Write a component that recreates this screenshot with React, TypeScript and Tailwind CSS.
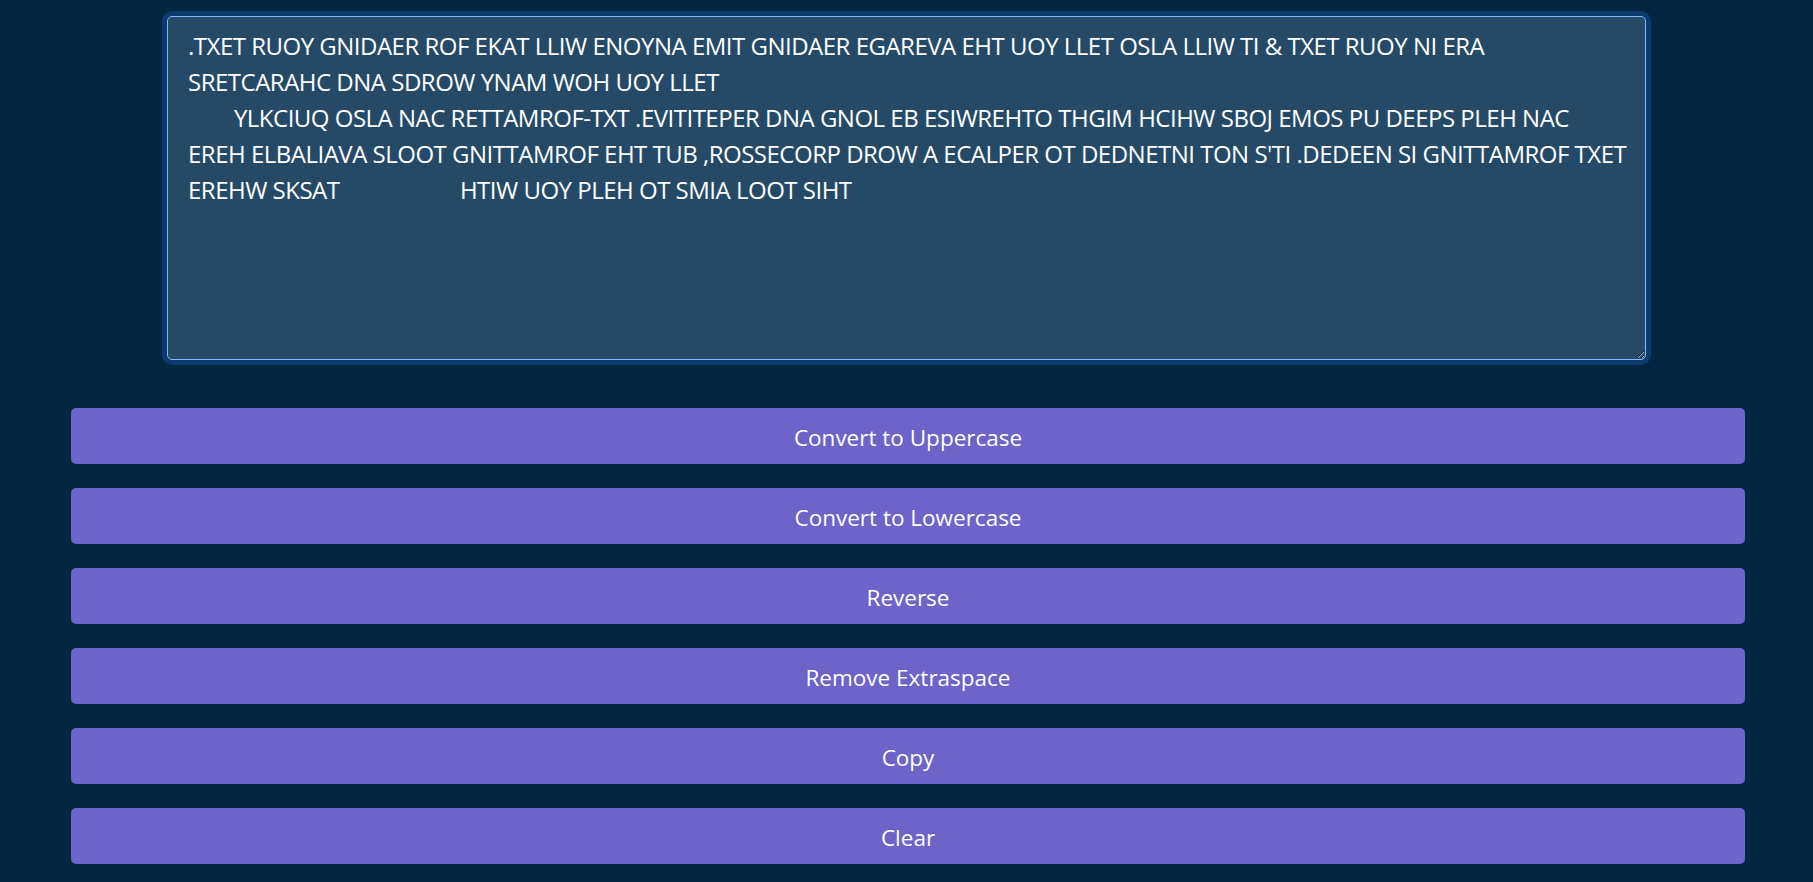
const lines = [
  ".TXET RUOY GNIDAER ROF EKAT LLIW ENOYNA EMIT GNIDAER EGAREVA EHT UOY LLET OSLA LLIW TI & TXET RUOY NI ERA",
  "SRETCARAHC DNA SDROW YNAM WOH UOY LLET",
  "        YLKCIUQ OSLA NAC RETTAMROF-TXT .EVITITEPER DNA GNOL EB ESIWREHTO THGIM HCIHW SBOJ EMOS PU DEEPS PLEH NAC",
  "EREH ELBALIAVA SLOOT GNITTAMROF EHT TUB ,ROSSECORP DROW A ECALPER OT DEDNETNI TON S'TI .DEDEEN SI GNITTAMROF TXET",
  "EREHW SKSAT                     HTIW UOY PLEH OT SMIA LOOT SIHT",
];

const actions = [
  "Convert to Uppercase",
  "Convert to Lowercase",
  "Reverse",
  "Remove Extraspace",
  "Copy",
  "Clear",
];

export default function App() {
  return (
    <div
      className="min-h-screen w-full bg-[#032641] pt-4 pb-6"
      style={{ fontFamily: '"Open Sans", "Noto Sans", sans-serif' }}
    >
      <div className="mx-auto w-[1479px]">
        <textarea
          className="block h-[344px] w-full resize overflow-hidden whitespace-pre rounded-[5px] border border-[#86b7fe] bg-[#254a68] pl-5 pr-4 pt-[11px] text-[24px] leading-[36px] tracking-[-0.5px] text-white shadow-[0_0_0_5px_#0a3a6e] outline-none"
          defaultValue={lines.join("\n")}
          spellCheck={false}
        />
      </div>

      <div className="mt-12 flex flex-col gap-6 pl-[71px] pr-[68px]">
        {actions.map((label) => (
          <button
            key={label}
            className="h-14 w-full rounded-[5px] bg-[#6d63c9] pt-[3px] text-[22.5px] text-white"
          >
            {label}
          </button>
        ))}
      </div>
    </div>
  );
}
